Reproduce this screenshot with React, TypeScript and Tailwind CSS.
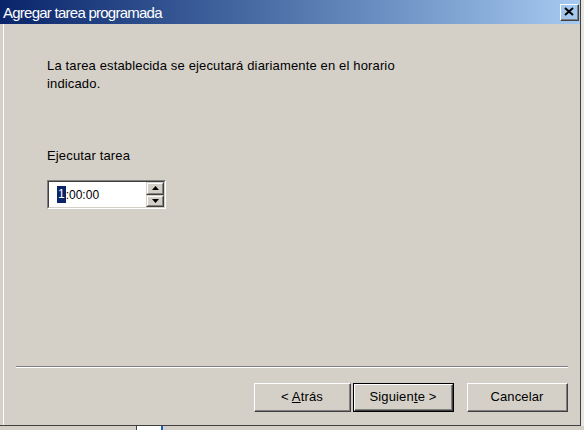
const font = { fontFamily: '"Liberation Sans", Arial, sans-serif' };

function Raised({
  children,
  isDefault = false,
  className = "",
}: {
  children: React.ReactNode;
  isDefault?: boolean;
  className?: string;
}) {
  const inner = (
    <div className="h-full w-full border-t border-l border-t-white border-l-white border-r border-b border-r-[#404040] border-b-[#404040]">
      <div className="h-full w-full flex items-center justify-center border-r border-b border-r-[#808080] border-b-[#808080] text-[13px] tracking-[0.15px] text-black">
        {children}
      </div>
    </div>
  );
  if (isDefault) {
    return <div className={`border border-black ${className}`}>{inner}</div>;
  }
  return <div className={className}>{inner}</div>;
}

function SpinBtn({ up }: { up?: boolean }) {
  return (
    <div className="flex-1 border-t border-l border-t-[#d4d0c8] border-l-[#d4d0c8] border-r border-b border-r-[#404040] border-b-[#404040] bg-[#d4d0c8]">
      <div className="h-full w-full flex items-center justify-center border-t border-l border-t-white border-l-white border-r border-b border-r-[#808080] border-b-[#808080]">
        <svg width="7" height="4" viewBox="0 0 7 4">
          {up ? (
            <polygon points="3.5,0 7,4 0,4" fill="#000" />
          ) : (
            <polygon points="0,0 7,0 3.5,4" fill="#000" />
          )}
        </svg>
      </div>
    </div>
  );
}

export default function App() {
  return (
    <div className="w-[584px] h-[430px] overflow-hidden bg-[#d4d0c8] flex flex-col" style={font}>
      <div className="flex flex-1">
        <div className="flex-1 flex flex-col border-r border-r-[#404040] border-b border-b-[#404040]">
          {/* title bar */}
          <div className="h-[24px] flex items-center justify-between pl-[3px] pr-[1px] bg-gradient-to-r from-[#0a246a] to-[#a6caf0]">
            <span className="text-white text-[15px] tracking-[-0.75px] leading-none">Agregar tarea programada</span>
            <Raised className="w-[19px] h-[17px]">
              <svg width="10" height="9" viewBox="0 0 10 9">
                <path d="M1 1 L9 8 M9 1 L1 8" stroke="#000" strokeWidth="2" />
              </svg>
            </Raised>
          </div>

          {/* content */}
          <div className="flex-1 flex flex-col ml-[3px] border-l border-l-white">
            <div className="flex-1 pl-[43px] pt-[33px]">
              <p className="text-[13px] tracking-[0.15px] leading-[18px] text-black w-[360px]">
                La tarea establecida se ejecutará diariamente en el horario indicado.
              </p>
              <p className="text-[13px] tracking-[0.15px] leading-[18px] text-black mt-[54px]">Ejecutar tarea</p>
              <div className="mt-[15px] w-[119px] h-[29px] border-t border-l border-t-[#808080] border-l-[#808080] border-r border-b border-r-white border-b-white">
                <div className="h-full w-full flex bg-white border-t border-l border-t-[#404040] border-l-[#404040] border-r border-b border-r-[#d4d0c8] border-b-[#d4d0c8]">
                  <div className="flex-1 flex items-center pl-[8px] text-[12px] text-black">
                    <span className="bg-[#0a246a] text-white px-px leading-[17px]">1</span>
                    <span>:00:00</span>
                  </div>
                  <div className="w-[18px] flex flex-col">
                    <SpinBtn up />
                    <SpinBtn />
                  </div>
                </div>
              </div>
            </div>

            <div className="ml-[12px] mr-[12px] border-t border-t-[#808080] border-b border-b-white" />

            <div className="h-[57px] flex items-start justify-end pt-[15px] pr-[12px]">
              <Raised className="w-[97px] h-[29px]">
                <span>
                  &lt; <span className="underline">A</span>trás
                </span>
              </Raised>
              <Raised isDefault className="w-[101px] h-[29px] ml-[2px]">
                <span>
                  Siguien<span className="underline">t</span>e &gt;
                </span>
              </Raised>
              <Raised className="w-[101px] h-[29px] ml-[13px]">
                <span>Cancelar</span>
              </Raised>
            </div>
          </div>
        </div>
        <div className="w-[3px] bg-[#e8e6e0]" />
      </div>
      <div className="h-[4px] flex bg-[#d4d0c8]">
        <div className="ml-[136px] w-[27px] bg-white border-l border-l-[#404040] border-r-2 border-r-[#1a5ec8]" />
      </div>
    </div>
  );
}
